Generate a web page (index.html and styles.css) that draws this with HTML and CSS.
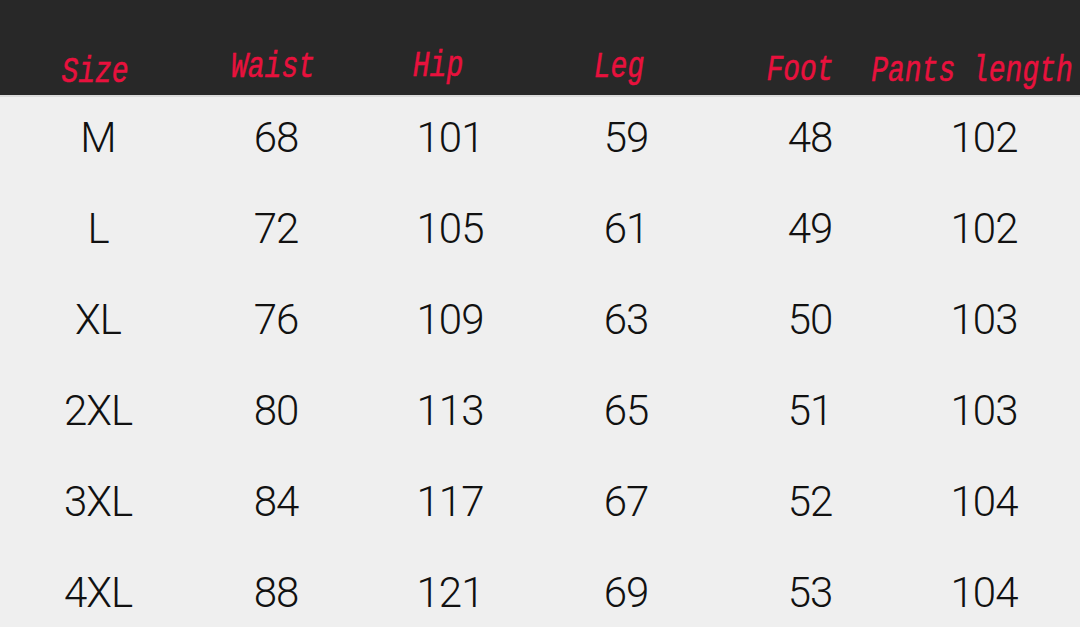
FILE: index.html
```html
<!DOCTYPE html>
<html>
<head>
<meta charset="utf-8">
<link rel="stylesheet" href="styles.css">
</head>
<body>
<div class="chart">
  <div class="head">
    <span class="h h1">Size</span>
    <span class="h h2">Waist</span>
    <span class="h h3">Hip</span>
    <span class="h h4">Leg</span>
    <span class="h h5">Foot</span>
    <span class="h h6">Pants length</span>
  </div>
  <div class="rows">
    <span>M</span><span>68</span><span>101</span><span>59</span><span>48</span><span>102</span>
    <span>L</span><span>72</span><span>105</span><span>61</span><span>49</span><span>102</span>
    <span>XL</span><span>76</span><span>109</span><span>63</span><span>50</span><span>103</span>
    <span>2XL</span><span>80</span><span>113</span><span>65</span><span>51</span><span>103</span>
    <span>3XL</span><span>84</span><span>117</span><span>67</span><span>52</span><span>104</span>
    <span>4XL</span><span>88</span><span>121</span><span>69</span><span>53</span><span>104</span>
  </div>
</div>
</body>
</html>
```
FILE: styles.css
```css
html, body {
  margin: 0;
  padding: 0;
  background: #efefef;
}
.chart {
  width: 1080px;
  height: 627px;
  overflow: hidden;
}
.head {
  height: 95px;
  background: #282828;
  border-bottom: 2px solid #dcdcdc;
  display: grid;
  grid-template-columns: 196px 160px 188px 164px 204px 168px;
  align-items: end;
  justify-items: center;
}
.h {
  font-family: "Liberation Mono", monospace;
  font-style: italic;
  font-size: 28px;
  color: #e8113d;
  -webkit-text-stroke: 0.4px #e8113d;
  display: inline-block;
  transform: scaleY(1.3);
  white-space: nowrap;
  line-height: 1;
}
.h1 { margin-bottom: 8px; margin-left: -6px; }
.h2 { margin-bottom: 13px; margin-left: -6px; }
.h3 { margin-bottom: 14px; margin-left: -24px; }
.h4 { margin-bottom: 13px; margin-left: -14px; }
.h5 { margin-bottom: 10px; margin-left: -20px; }
.h6 { margin-bottom: 9px; margin-left: -48px; }
.rows {
  display: grid;
  grid-template-columns: 196px 160px 188px 164px 204px 144px;
  grid-auto-rows: 91px;
  margin-top: -5px;
  align-items: center;
  justify-items: center;
  font-family: Roboto, "Liberation Sans", sans-serif;
  font-weight: 300;
  font-size: 42px;
  color: #111;
  letter-spacing: -1px;
}
```
